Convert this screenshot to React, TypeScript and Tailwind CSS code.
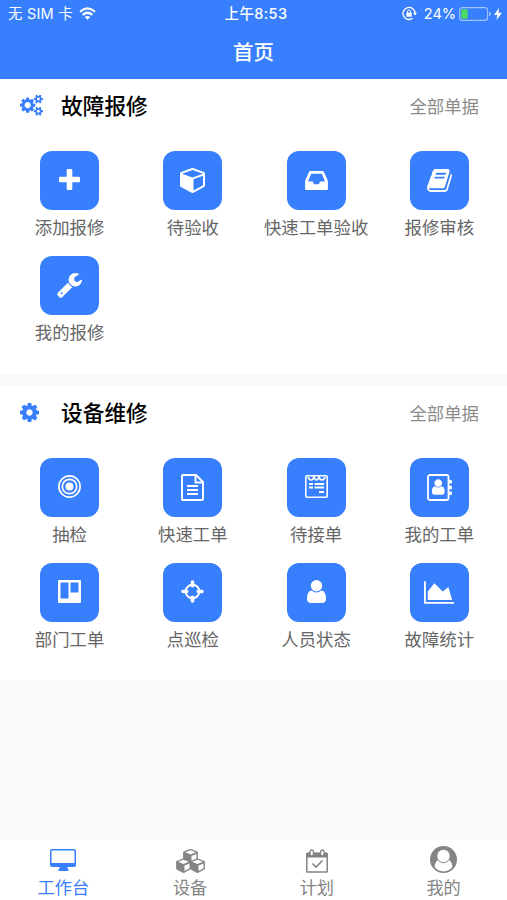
import type { ReactNode } from "react";

const USER =
  "M1536 1399q0 109-62.5 187t-150.5 78h-854q-88 0-150.5-78t-62.5-187q0-85 8.5-160.5t31.5-152 58.5-131 94-89 134.5-34.5q131 128 313 128t313-128q76 0 134.5 34.5t94 89 58.5 131 31.5 152 8.5 160.5zm-256-887q0 159-112.5 271.5t-271.5 112.5-271.5-112.5-112.5-271.5 112.5-271.5 271.5-112.5 271.5 112.5 112.5 271.5z";
const CUBE =
  "M896 1629l640-349v-636l-640 233v752zm-64-865l698-254-698-254-698 254zm832-252v768q0 35-18 65t-49 47l-704 384q-28 16-61 16t-61-16l-704-384q-31-17-49-47t-18-65v-768q0-40 23-73t61-47l704-256q22-8 44-8t44 8l704 256q38 14 61 47t23 73z";
const COG =
  "M1152 896q0-106-75-181t-181-75-181 75-75 181 75 181 181 75 181-75 75-181zm512-109v222q0 12-8 23t-20 13l-185 28q-19 54-39 91 35 50 107 138 10 12 10 25t-9 23q-27 37-99 108t-94 71q-12 0-26-9l-138-108q-44 23-91 38-16 136-29 186-7 28-36 28h-222q-14 0-24.5-8.5t-11.5-21.5l-28-184q-49-16-90-37l-141 107q-10 9-25 9-14 0-25-11-126-114-165-168-7-10-7-23 0-12 8-23 15-21 51-66.5t54-70.5q-27-50-41-99l-183-27q-13-2-21-12.5t-8-23.5v-222q0-12 8-23t19-13l186-28q14-46 39-92-40-57-107-138-10-12-10-24 0-10 9-23 26-36 98.5-107.5t94.5-71.5q13 0 26 10l138 107q44-23 91-38 16-136 29-186 7-28 36-28h222q14 0 24.5 8.5t11.5 21.5l28 184q49 16 90 37l142-107q9-9 24-9 13 0 25 10 129 119 165 170 7 8 7 22 0 12-8 23-15 21-51 66.5t-54 70.5q26 50 41 98l183 28q13 2 21 12.5t8 23.5z";
const BIG_COG =
  "M896 896q0-106-75-181t-181-75-181 75-75 181 75 181 181 75 181-75 75-181zm384-91v185q0 10-7 19.5t-16 10.5l-155 24q-11 35-32 76 34 48 90 115 7 11 7 20 0 12-7 19-23 30-82.5 89.5t-78.5 59.5q-11 0-21-7l-115-90q-37 19-77 31-11 108-23 155-7 24-30 24h-186q-11 0-20-7.5t-10-17.5l-23-153q-34-10-75-31l-118 89q-7 7-20 7-11 0-21-8-144-133-144-160 0-9 7-19 10-14 41-53t47-61q-23-44-35-82l-152-24q-10-1-17-9.5t-7-19.5v-185q0-10 7-19.5t16-10.5l155-24q11-35 32-76-34-48-90-115-7-11-7-20 0-12 7-20 22-30 82-89t79-59q11 0 21 7l115 90q34-18 77-32 11-108 23-154 7-24 30-24h186q11 0 20 7.5t10 17.5l23 153q34 10 75 31l118-89q8-7 20-7 11 0 21 8 144 133 144 160 0 8-7 19-12 16-42 54t-45 60q23 48 34 82l152 23q10 2 17 10.5t7 19.5z";
const SMALL_COG =
  "M1664 1408q0-52-38-90t-90-38-90 38-38 90q0 53 37.5 90.5t90.5 37.5 90.5-37.5 37.5-90.5zm256-70v140q0 16-149 31-12 27-30 52 51 113 51 138 0 4-4 7-122 71-124 71-8 0-46-47t-52-68q-20 2-30 2t-30-2q-14 21-52 68t-46 47q-2 0-124-71-4-3-4-7 0-25 51-138-18-25-30-52-149-15-149-31v-140q0-16 149-31 13-29 30-52-51-113-51-138 0-4 4-7 4-2 35-20t59-34 30-16q8 0 46 46.5t52 67.5q20-2 30-2t30 2q51-71 92-112l6-2q4 0 124 70 4 3 4 7 0 25-51 138 17 23 30 52 149 15 149 31z";
const WRENCH =
  "M448 1472q0-26-19-45t-45-19-45 19-19 45 19 45 45 19 45-19 19-45zm644-420l-682 682q-37 37-90 37-52 0-91-37l-106-108q-38-36-38-90 0-53 38-91l681-681q39 98 114.5 173.5t173.5 114.5zm634-435q0 39-23 106-47 134-164.5 217.5t-258.5 83.5q-185 0-316.5-131.5t-131.5-316.5 131.5-316.5 316.5-131.5q58 0 121.5 16.5t107.5 46.5q16 11 16 28t-16 28l-293 169v224l193 107q5-3 79-48.5t135.5-81 70.5-35.5q15 0 23.5 10t8.5 25z";
const BOOK =
  "M1639 478q40 57 18 129l-275 906q-19 64-76.5 107.5t-122.5 43.5h-923q-77 0-148.5-53.5t-99.5-131.5q-24-67-2-127 0-4 3-27t4-37q1-8-3-21.5t-3-19.5q2-11 8-21t16.5-23.5 16.5-23.5q23-38 45-91.5t30-91.5q3-10 .5-30t-.5-28q3-11 17-28t17-23q21-36 42-92t25-90q1-9-2.5-32t.5-28q4-13 22-30.5t22-22.5q19-26 42.5-84.5t27.5-96.5q1-8-3-25.5t-2-26.5q2-8 9-18t18-23 17-21q8-12 16.5-30.5t15-35 16-36 19.5-32 26.5-23.5 36-11.5 47.5 5.5l-1 3q38-9 51-9h761q74 0 114 56t18 130l-274 906q-36 119-71.5 153.5t-128.5 34.5h-869q-27 0-38 15-11 16-1 43 24 70 144 70h923q29 0 56-15.5t35-41.5l300-987q7-22 5-57 38 15 59 43zm-1064 2q-4 13 2 22.5t20 9.5h608q13 0 25.5-9.5t16.5-22.5l21-64q4-13-2-22.5t-20-9.5h-608q-13 0-25.5 9.5t-16.5 22.5zm-83 256q-4 13 2 22.5t20 9.5h608q13 0 25.5-9.5t16.5-22.5l21-64q4-13-2-22.5t-20-9.5h-608q-13 0-25.5 9.5t-16.5 22.5z";
const INBOX =
  "M1151 960h316q-1-3-2.5-8.5t-2.5-7.5l-212-496h-708l-212 496q-1 3-2.5 8t-2.5 8h316l95 192h320zm513 30v482q0 26-19 45t-45 19h-1408q-26 0-45-19t-19-45v-482q0-62 25-123l238-552q10-25 36.5-42t52.5-17h832q26 0 52.5 17t36.5 42l238 552q25 61 25 123z";

type Item = { label: string; icon: ReactNode };

const reportItems: Item[] = [
  {
    label: "添加报修",
    icon: (
      <svg className="mb-0.5 h-[21px] w-[21px]" viewBox="0 0 21 21" fill="currentColor">
        <path d="M9 0h3q1.3 0 1.3 1.3v6.4h6.4Q21 7.700 21 9v3q0 1.300-1.300 1.300h-6.400v6.400Q13.300 21 12 21H9q-1.300 0-1.300-1.300v-6.400H1.300Q0 13.300 0 12V9Q0 7.700 1.300 7.700h6.400V1.300Q7.700 0 9 0z" />
      </svg>
    ),
  },
  {
    label: "待验收",
    icon: (
      <svg className="h-[25px] w-[25px]" viewBox="0 128 1664 1664" fill="currentColor">
        <path d={CUBE} />
      </svg>
    ),
  },
  {
    label: "快速工单验收",
    icon: (
      <svg className="mb-px h-[19px] w-[23px]" viewBox="128 256 1536 1280" fill="currentColor">
        <path d={INBOX} />
      </svg>
    ),
  },
  {
    label: "报修审核",
    icon: (
      <svg className="mb-px h-[23px] w-[25px]" viewBox="0 128 1664 1536" fill="currentColor">
        <path d={BOOK} />
      </svg>
    ),
  },
  {
    label: "我的报修",
    icon: (
      <svg className="h-[25px] w-[25px]" viewBox="64 128 1664 1664" fill="currentColor">
        <path d={WRENCH} />
      </svg>
    ),
  },
];

const repairItems: Item[] = [
  {
    label: "抽检",
    icon: (
      <svg className="mb-0.5 h-[23px] w-[23px]" viewBox="0 0 23 23" fill="none" stroke="currentColor">
        <circle cx="11.500" cy="11.500" r="10.600" strokeWidth="1.700" />
        <circle cx="11.500" cy="11.500" r="7.200" strokeWidth="1.700" />
        <circle cx="11.500" cy="11.500" r="4" fill="currentColor" stroke="none" />
      </svg>
    ),
  },
  {
    label: "快速工单",
    icon: (
      <svg className="mb-px h-[27px] w-[23px]" viewBox="0 0 23 27" fill="none" stroke="currentColor" strokeWidth="1.900">
        <path d="M2 1h13l7 7v17q0 1-1 1H2q-1 0-1-1V2q0-1 1-1z" />
        <path d="M14.500 1v7.500H22M6 12h11M6 16h11M6 20h11" />
      </svg>
    ),
  },
  {
    label: "待接单",
    icon: (
      <svg className="mb-0.5 h-[23px] w-[23px]" viewBox="0 0 23 23" fill="none" stroke="currentColor">
        <rect x=".8" y=".8" width="21.400" height="21.400" rx="1.300" strokeWidth="1.600" />
        <path d="M3 2q1 3 3 3t3-3q1 3 2.500 3T14 2q1 3 3 3t3-3" strokeWidth="1.600" />
        <path d="M4 9h4M9.500 9H19M4 12.500h4M9.500 12.500H19M14 17h5" strokeWidth="2" />
      </svg>
    ),
  },
  {
    label: "我的工单",
    icon: (
      <svg className="mb-px h-[27px] w-[25px]" viewBox="0 0 25 27" fill="currentColor">
        <rect x="1" y="1" width="20.500" height="25" rx="2" fill="none" stroke="currentColor" strokeWidth="1.800" />
        <path d="M22 6h2q1 0 1 1v1.500q0 1-1 1h-2zM22 11.800h2q1 0 1 1v1.500q0 1-1 1h-2zM22 17.500h2q1 0 1 1V20q0 1-1 1h-2z" />
        <path d={USER} transform="translate(2.300 4) scale(.01)" />
      </svg>
    ),
  },
  {
    label: "部门工单",
    icon: (
      <svg className="mb-0.5 h-[23px] w-[23px]" viewBox="0 0 23 23" fill="currentColor" fillRule="evenodd">
        <path d="M1 0h21q1 0 1 1v21q0 1-1 1H1q-1 0-1-1V1q0-1 1-1zM3 2.500q-.5 0-.5.5v15q0 .5.5.5h7q.5 0 .5-.5V3q0-.5-.5-.5zM13 2.500q-.5 0-.5.5v9q0 .5.5.5h7q.5 0 .5-.5V3q0-.5-.5-.5z" />
      </svg>
    ),
  },
  {
    label: "点巡检",
    icon: (
      <svg className="mb-0.5 h-[23px] w-[23px]" viewBox="0 0 23 23" fill="none" stroke="currentColor">
        <circle cx="11.500" cy="11.500" r="6.800" strokeWidth="2" />
        <path d="M11.500 2v3.800M11.500 17.200V21M2 11.500h3.800M17.200 11.500H21" strokeWidth="3.600" strokeLinecap="round" />
      </svg>
    ),
  },
  {
    label: "人员状态",
    icon: (
      <svg className="mb-0.5 h-[23px] w-[19px]" viewBox="256 128 1280 1536" fill="currentColor">
        <path d={USER} />
      </svg>
    ),
  },
  {
    label: "故障统计",
    icon: (
      <svg className="mb-px h-[23px] w-[30px]" viewBox="0 128 2048 1536" fill="currentColor">
        <path d="M2048 1536v128h-2048v-1536h128v1408h1920zm-384-1024l256 896h-1664v-576l448-576 576 576z" />
      </svg>
    ),
  },
];

function Section({ title, icon, items }: { title: string; icon: ReactNode; items: Item[] }) {
  return (
    <section className="bg-white">
      <div className="flex h-[54px] items-center pl-5 pr-7">
        <div className="w-[41px] text-[#387ffd]">{icon}</div>
        <h2 className="flex-1 pt-px text-[21.700px] font-medium leading-none text-black">{title}</h2>
        <span className="pt-px text-[17.400px] leading-none text-[#8c8c8c]">全部单据</span>
      </div>
      <div className="grid grid-cols-4 pl-2 pr-1.5 pt-[18px]">
        {items.map((item) => (
          <div key={item.label} className="flex h-[105px] flex-col items-center">
            <div className="flex h-[59px] w-[59px] items-center justify-center rounded-[12px] bg-[#387ffd] text-white">
              {item.icon}
            </div>
            <span className="mt-1.5 whitespace-nowrap text-[17.400px] leading-6 text-[#666]">{item.label}</span>
          </div>
        ))}
      </div>
    </section>
  );
}

const miniCube = "M0-7.300l7 2.700v7.600l-7 3.800-7-3.800v-7.600z";

const tabs: Item[] = [
  {
    label: "工作台",
    icon: (
      <svg className="mb-[3px] h-[22px] w-[26px]" viewBox="0 0 26 22" fill="currentColor">
        <path fillRule="evenodd" d="M2 0h22q2 0 2 2v14q0 2-2 2h-6.500v1.500l1 1V22h-10v-1.500l1-1V18H2q-2 0-2-2V2Q0 0 2 0zM2 1.500q-.5 0-.5.5v12h23V2q0-.5-.5-.5z" />
      </svg>
    ),
  },
  {
    label: "设备",
    icon: (
      <svg className="mb-px h-6 w-[29px]" viewBox="0 0 29 24">
        {[
          [14.5, 7.5],
          [7.5, 17],
          [21.5, 17],
        ].map(([x, y]) => (
          <g key={x} transform={`translate(${x} ${y})`}>
            <path d={miniCube} fill="currentColor" stroke="currentColor" strokeLinejoin="round" strokeWidth=".8" />
            <path d="M0-6.200l5.300 2L0-2.100l-5.300-2.100zM1-.600l5-2v4.900L1 5z" fill="#fff" />
          </g>
        ))}
      </svg>
    ),
  },
  {
    label: "计划",
    icon: (
      <svg className="mb-px h-6 w-[22px]" viewBox="0 0 22 24" fill="none" stroke="currentColor">
        <path d="M1 8V4.500q0-.5.5-.5h19q.5 0 .5.5V8z" fill="currentColor" />
        <rect x=".8" y="4.500" width="20.400" height="18.500" rx=".5" strokeWidth="1.500" />
        <rect x="4" y="1" width="3.400" height="6" rx="1.700" fill="#fff" strokeWidth="1.300" />
        <rect x="14.600" y="1" width="3.400" height="6" rx="1.700" fill="#fff" strokeWidth="1.300" />
        <path d="M6.500 14.500l3.500 3.500 6.500-6.500" strokeWidth="1.600" />
      </svg>
    ),
  },
  {
    label: "我的",
    icon: (
      <svg className="mb-px h-[27px] w-[27px]" viewBox="0 0 27 27">
        <circle cx="13.500" cy="13.500" r="13.500" fill="currentColor" />
        <path d="M4.500 20.800q.8-6.500 5-7.300h8q4.200.8 5 7.300-3.300 4.600-9 4.600t-9-4.600z" fill="#fff" />
        <circle cx="13.500" cy="10" r="6.700" fill="#fff" stroke="currentColor" strokeWidth="1" />
      </svg>
    ),
  },
];

export default function App() {
  return (
    <div className="flex h-[900px] w-[507px] flex-col overflow-hidden bg-[#fafafa] font-['Inter','Noto_Sans_CJK_SC',sans-serif]">
      <header className="h-[79px] bg-[#387ffd] text-white">
        <div className="grid h-7 grid-cols-[1fr_auto_1fr] items-center pl-2 pr-[5px] text-[14.500px] leading-none">
          <div className="flex items-center gap-1.5">
            <span className="tracking-[0.200px]">无 SIM 卡</span>
            <svg className="mb-0.5 h-[13px] w-[17px]" viewBox="0 0 17 13" fill="none" stroke="currentColor" strokeWidth="2.200">
              <path d="M1 4.800Q8.500-1.900 16 4.800M3.700 7.800q4.800-4.100 9.600 0" />
              <path d="M8.500 12.800L5.700 10q2.800-2.200 5.600 0z" fill="currentColor" stroke="none" />
            </svg>
          </div>
          <span className="pl-0.5 font-medium tracking-[0.400px]">上午8:53</span>
          <div className="flex items-center justify-end">
            <svg className="mb-px mr-[7px] h-[15px] w-[15px]" viewBox="0 0 15 15" fill="none" stroke="currentColor">
              <path d="M10.700 12.200A6 6 0 1 1 13 7.500" strokeWidth="1.300" />
              <path d="M11 6.800h4l-2 2.800z" fill="currentColor" stroke="none" />
              <rect x="4.300" y="6.500" width="5.400" height="4.200" rx=".5" fill="currentColor" stroke="none" />
              <path d="M5.500 6.800V5.500q0-1.500 1.500-1.500t1.500 1.500v1.300" />
            </svg>
            <span>24%</span>
            <svg className="ml-[3px] h-[14px] w-8" viewBox="0 0 32 14">
              <rect x=".6" y=".6" width="28" height="12.800" rx="3" fill="none" stroke="#9fc3ff" strokeWidth="1.100" />
              <path d="M30.200 4.700q1.800.6 1.800 2.300t-1.800 2.300z" fill="#9fc3ff" />
              <rect x="2.200" y="2.200" width="6.500" height="9.600" rx="1.300" fill="#4cd964" />
            </svg>
            <svg className="ml-[3px] h-3 w-2" viewBox="0 0 8 12" fill="currentColor">
              <path d="M5 0L0 7h3.300L2.500 12 8 4.800H4.600z" />
            </svg>
          </div>
        </div>
        <h1 className="pt-[11px] text-center text-[20.500px] font-medium leading-7">首页</h1>
      </header>

      <main className="flex-1">
        <div className="h-[295px] bg-white">
          <Section
            title="故障报修"
            items={reportItems}
            icon={
              <svg className="mb-px h-[21px] w-[23px]" viewBox="0 50 1920 1752" fill="currentColor">
                <path d={BIG_COG} />
                <path d={SMALL_COG} />
                <path d={SMALL_COG} transform="translate(0 -1024)" />
              </svg>
            }
          />
        </div>
        <div className="mt-3 h-[294px] bg-white">
          <Section
            title="设备维修"
            items={repairItems}
            icon={
              <svg className="mb-0.5 h-[19px] w-[19px]" viewBox="128 128 1536 1536" fill="currentColor">
                <path d={COG} />
              </svg>
            }
          />
        </div>
      </main>

      <nav className="grid h-[60px] grid-cols-4 bg-white">
        {tabs.map((tab, i) => (
          <div
            key={tab.label}
            className={i === 0 ? "flex flex-col items-center text-[#387ffd]" : "flex flex-col items-center text-[#848484]"}
          >
            <div className="flex h-[34px] items-end">{tab.icon}</div>
            <span className="mt-[3px] text-[17.200px] leading-[22px]">{tab.label}</span>
          </div>
        ))}
      </nav>
    </div>
  );
}
